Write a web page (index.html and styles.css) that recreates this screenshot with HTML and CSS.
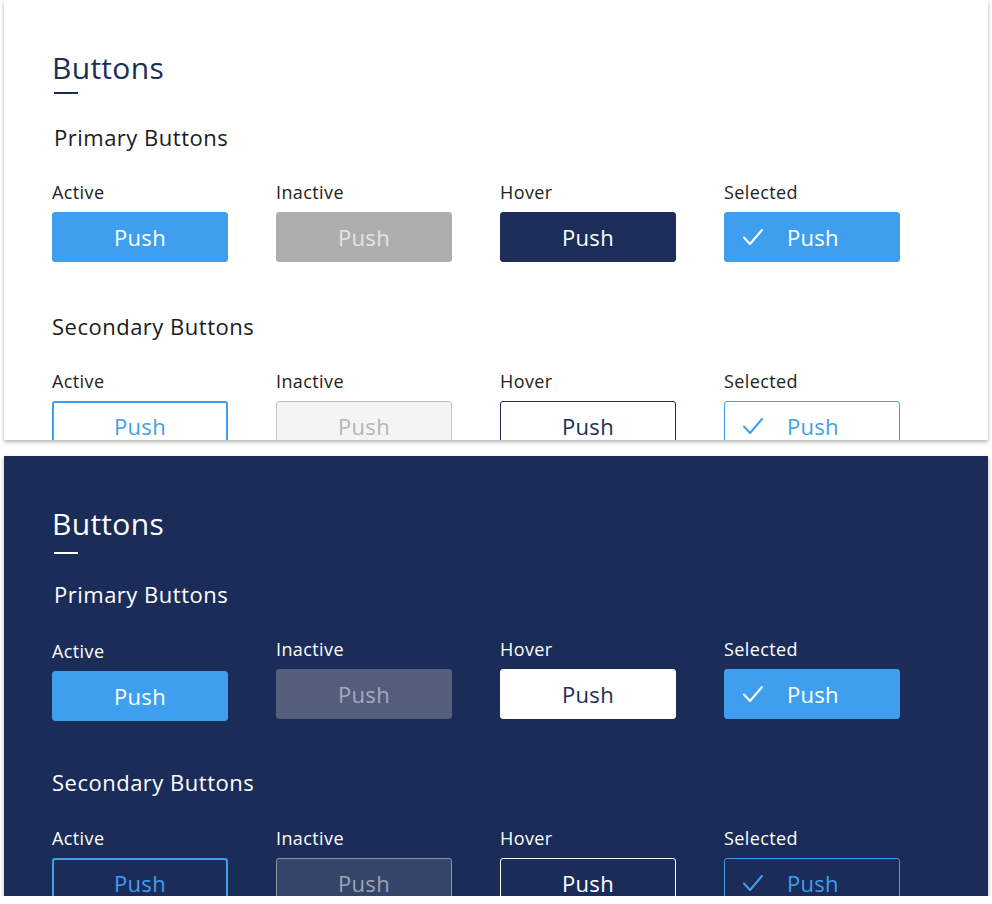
FILE: index.html
```html
<!DOCTYPE html>
<html lang="en">
  <head>
    <meta charset="UTF-8">
    <title>Buttons</title>
    <link rel="stylesheet" href="styles.css">
  </head>
  <body>
    <!-- light theme -->
    <div class="panel light">
      <h1 class="title">Buttons</h1>
      <div class="rule"></div>

      <h2 class="group">Primary Buttons</h2>
      <div class="row">
        <div class="cell">
          <div class="label">Active</div>
          <button class="btn primary">Push</button>
        </div>
        <div class="cell">
          <div class="label">Inactive</div>
          <button class="btn primary inactive">Push</button>
        </div>
        <div class="cell">
          <div class="label">Hover</div>
          <button class="btn primary hover">Push</button>
        </div>
        <div class="cell">
          <div class="label">Selected</div>
          <button class="btn primary selected">
            <svg class="check" viewBox="0 0 20 16"><path d="M1 8.5 L7 15 L19 1"/></svg>Push
          </button>
        </div>
      </div>

      <h2 class="group second">Secondary Buttons</h2>
      <div class="row">
        <div class="cell">
          <div class="label">Active</div>
          <button class="btn secondary">Push</button>
        </div>
        <div class="cell">
          <div class="label">Inactive</div>
          <button class="btn secondary inactive">Push</button>
        </div>
        <div class="cell">
          <div class="label">Hover</div>
          <button class="btn secondary hover">Push</button>
        </div>
        <div class="cell">
          <div class="label">Selected</div>
          <button class="btn secondary selected">
            <svg class="check" viewBox="0 0 20 16"><path d="M1 8.5 L7 15 L19 1"/></svg>Push
          </button>
        </div>
      </div>
    </div>

    <!-- dark theme -->
    <div class="panel dark">
      <h1 class="title">Buttons</h1>
      <div class="rule"></div>

      <h2 class="group">Primary Buttons</h2>
      <div class="row">
        <div class="cell lowered">
          <div class="label">Active</div>
          <button class="btn primary">Push</button>
        </div>
        <div class="cell">
          <div class="label">Inactive</div>
          <button class="btn primary inactive">Push</button>
        </div>
        <div class="cell">
          <div class="label">Hover</div>
          <button class="btn primary hover">Push</button>
        </div>
        <div class="cell">
          <div class="label">Selected</div>
          <button class="btn primary selected">
            <svg class="check" viewBox="0 0 20 16"><path d="M1 8.5 L7 15 L19 1"/></svg>Push
          </button>
        </div>
      </div>

      <h2 class="group second">Secondary Buttons</h2>
      <div class="row">
        <div class="cell">
          <div class="label">Active</div>
          <button class="btn secondary">Push</button>
        </div>
        <div class="cell">
          <div class="label">Inactive</div>
          <button class="btn secondary inactive">Push</button>
        </div>
        <div class="cell">
          <div class="label">Hover</div>
          <button class="btn secondary hover">Push</button>
        </div>
        <div class="cell">
          <div class="label">Selected</div>
          <button class="btn secondary selected">
            <svg class="check" viewBox="0 0 20 16"><path d="M1 8.5 L7 15 L19 1"/></svg>Push
          </button>
        </div>
      </div>
    </div>
  </body>
</html>
```

FILE: styles.css
```css
body {
  font-family: "Open Sans", Lato, sans-serif;
  margin: 0;
  padding: 0 4px;
  background-color: #fff;
}

.panel {
  height: 440px;
  overflow: hidden;
  padding: 0 48px;
  box-sizing: border-box;
  box-shadow: 0 2px 4px rgba(0, 0, 0, 0.3);
}

.light {
  background-color: #fff;
  color: #1a1a1a;
}

.dark {
  margin-top: 16px;
  background-color: #1a2c57;
  color: #fff;
}

.title {
  margin: 0;
  padding-top: 50px;
  font-size: 30px;
  line-height: 36px;
  font-weight: 400;
  letter-spacing: 0.3px;
}

.light .title {
  color: #1b2d58;
}

.rule {
  width: 24px;
  height: 2px;
  margin: 6px 0 0 2px;
  background-color: #1b2d58;
}

.dark .rule {
  margin-top: 10px;
  background-color: #fff;
}

.group {
  margin: 30px 0 0 2px;
  font-size: 22px;
  line-height: 26px;
  font-weight: 400;
  letter-spacing: 0.5px;
}

.dark .group {
  margin-top: 27px;
}

.group.second {
  margin: 51px 0 0 0;
}

.dark .group.second {
  margin-top: 48px;
}

.row {
  display: flex;
  gap: 48px;
  margin-top: 31px;
}

.dark .second + .row {
  margin-top: 32px;
}

.cell {
  width: 176px;
}

.cell.lowered {
  padding-top: 2px;
}

.label {
  font-size: 18px;
  line-height: 22px;
  margin-bottom: 9px;
  letter-spacing: 0.4px;
}

.light .label {
  color: #222;
}

.btn {
  display: flex;
  align-items: center;
  justify-content: center;
  width: 176px;
  height: 50px;
  padding: 0;
  box-sizing: border-box;
  border: 1px solid transparent;
  border-radius: 3px;
  font-family: inherit;
  font-size: 22px;
  letter-spacing: 0.3px;
  cursor: pointer;
}

.btn.selected {
  justify-content: flex-start;
  padding-left: 18px;
}

.check {
  width: 20px;
  height: 16px;
  margin-right: 24px;
  fill: none;
  stroke: currentColor;
  stroke-width: 2;
  stroke-linecap: round;
  stroke-linejoin: round;
}

/* primary */
.primary {
  background-color: #3f9fef;
  border-color: #3f9fef;
  color: #fff;
}

.light .primary.inactive {
  background-color: #adadad;
  border-color: #adadad;
  color: #e4e4e4;
}

.light .primary.hover {
  background-color: #1b2d58;
  border-color: #1b2d58;
}

.dark .primary.inactive {
  background-color: #525e7c;
  border-color: #525e7c;
  color: #a5abba;
}

.dark .primary.hover {
  background-color: #fff;
  border-color: #fff;
  color: #1b2d58;
}

/* secondary */
.secondary {
  border: 2px solid #3f9fef;
  color: #3f9fef;
}

.light .secondary {
  background-color: #fff;
}

.dark .secondary {
  background-color: #1a2c57;
}

.secondary.inactive,
.secondary.hover,
.secondary.selected {
  border-width: 1px;
}

.light .secondary.inactive {
  background-color: #f4f4f4;
  border-color: #c2c2c2;
  color: #b5b5b5;
}

.light .secondary.hover {
  border-color: #1b2d58;
  color: #1b2d58;
}

.dark .secondary.inactive {
  background-color: #344569;
  border-color: #8c92a2;
  color: #9da3b0;
}

.dark .secondary.hover {
  border-color: #fff;
  color: #fff;
}
```
